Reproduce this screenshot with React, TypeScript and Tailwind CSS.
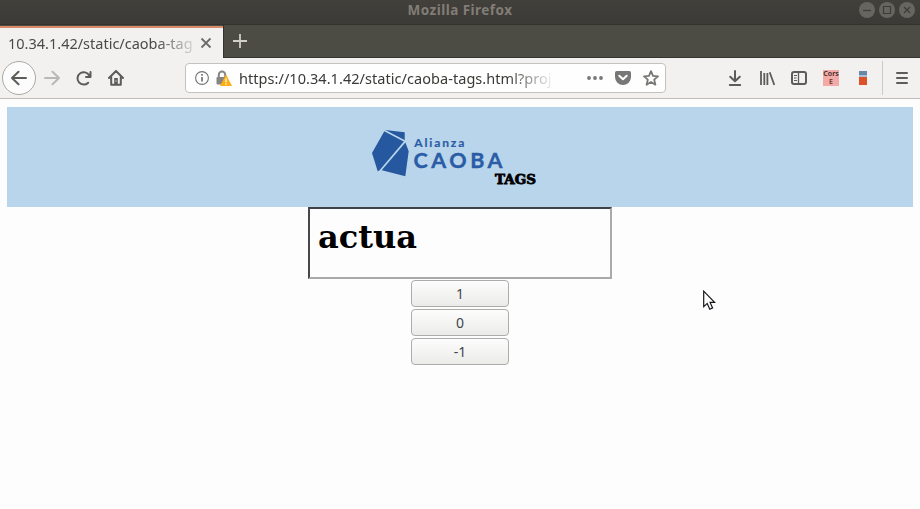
import React from "react";

const ui = "font-['Noto_Sans','Open_Sans',sans-serif]";

function WindowButton({ children }: { children: React.ReactNode }) {
  return (
    <span className="flex size-4 items-center justify-center rounded-full bg-[#67655f]">
      <svg width="16" height="16" viewBox="0 0 16 16" fill="none" stroke="#3c3b37" strokeWidth="1.2">
        {children}
      </svg>
    </span>
  );
}

function TitleBar() {
  return (
    <header className="grid h-[25px] grid-cols-[1fr_auto_1fr] items-start border-b border-[#33322e] bg-gradient-to-b from-[#41403b] to-[#3b3a36]">
      <span />
      <span className="pt-[1px] text-[13.5px] leading-[18px] font-bold tracking-[0.47px] text-[#827d76]">Mozilla Firefox</span>
      <div className="flex justify-end gap-1 pt-[2px] pr-[5px]">
        <WindowButton><path d="M4 8.5h8" /></WindowButton>
        <WindowButton><path d="M4.5 4.5h7v7h-7z" /></WindowButton>
        <WindowButton><path d="m5 5 6 6m0-6-6 6" /></WindowButton>
      </div>
    </header>
  );
}

function TabStrip() {
  return (
    <div className="flex h-[33px] border-b border-[#35342f] bg-[#4c4b44]">
      <div className="mt-px -mb-px flex w-[223px] items-center border-t-2 border-[#d98b69] bg-[#f2f1f0] pr-[11px] pl-2">
        <span className="w-[187px] text-[14.5px] leading-5 whitespace-nowrap text-[#4a4a47] [mask-image:linear-gradient(to_right,#000_148px,transparent_192px)]">
          10.34.1.42/static/caoba-tag
        </span>
        <svg className="ml-[5px]" width="12" height="12" viewBox="0 0 12 12" stroke="#6b6b68" strokeWidth="1.8">
          <path d="m1.5 1.5 9 9m0-9-9 9" />
        </svg>
      </div>
      <div className="flex items-center border-l border-[#33322e] pl-[9px]">
        <svg width="14" height="14" viewBox="0 0 14 14" stroke="#d0cec7" strokeWidth="1.8">
          <path d="M7 0v14M0 7h14" />
        </svg>
      </div>
    </div>
  );
}

function AddressBar() {
  return (
    <div className="flex h-[30px] w-[481px] items-center rounded-[4px] border border-[#c4c2bf] bg-[#fefefe] pl-[9px]">
      <svg width="14" height="14" viewBox="0 0 14 14" fill="none" stroke="#737371">
        <circle cx="7" cy="7" r="6.4" strokeWidth="1.1" />
        <path d="M7 6v4.5M7 3v1.7" strokeWidth="1.7" />
      </svg>
      <svg className="ml-[7px]" width="16" height="16" viewBox="0 0 16 16">
        <path d="M2.8 7V4.7a3.2 3.2 0 0 1 6.4 0V7" fill="none" stroke="#858583" strokeWidth="2" />
        <rect x="0.5" y="7" width="10" height="7.5" rx="1" fill="#858583" />
        <path d="M10 4.5 16 16H4z" fill="#ffae12" />
        <path d="M10 8.6v3.6m0 1v1.5" stroke="#fff" strokeWidth="1.3" />
      </svg>
      <span className="ml-[7px] w-[314px] text-[14.5px] leading-5 tracking-[0.05px] whitespace-nowrap text-[#393936] [mask-image:linear-gradient(to_right,#000_268px,transparent_316px)]">
        https://10.34.1.42/static/caoba-tags.html?proj
      </span>
      <svg className="ml-[34px]" width="16" height="16" viewBox="0 0 16 16" fill="#777775">
        <circle cx="2" cy="8" r="1.9" /><circle cx="8" cy="8" r="1.9" /><circle cx="14" cy="8" r="1.9" />
      </svg>
      <svg className="ml-3" width="16" height="16" viewBox="0 0 16 16">
        <path d="M1.8 1h12.4A1.8 1.8 0 0 1 16 2.8V7A8 8 0 0 1 0 7V2.8A1.8 1.8 0 0 1 1.8 1z" fill="#777775" />
        <path d="m4.3 5.8 3.7 3.5 3.7-3.5" fill="none" stroke="#fff" strokeWidth="2" strokeLinecap="round" strokeLinejoin="round" />
      </svg>
      <svg className="ml-3" width="16" height="16" viewBox="0 0 16 16" fill="none" stroke="#777775" strokeWidth="1.8" strokeLinejoin="round">
        <path d="m8 1.2 2 4.6 5 .5-3.8 3.4 1.2 5L8 12l-4.4 2.7 1.2-5L1 6.3l5-.5z" />
      </svg>
    </div>
  );
}

function Toolbar() {
  return (
    <div className="flex h-[41px] items-center border-b border-[#bebcba] bg-[#f2f1f0] pl-[2px] text-[#5c5c59]">
      <span className="flex size-[34px] items-center justify-center rounded-full border border-[#aaa9a6] bg-[#fcfcfc]">
        <svg width="16" height="16" viewBox="0 0 16 16" fill="none" stroke="currentColor" strokeWidth="2" strokeLinecap="round" strokeLinejoin="round">
          <path d="M15 8H1M7.5 1.8 1 8l6.5 6.2" />
        </svg>
      </span>
      <svg className="ml-2" width="16" height="16" viewBox="0 0 16 16" fill="none" stroke="#b9b8b6" strokeWidth="2" strokeLinecap="round" strokeLinejoin="round">
        <path d="M1 8h14M8.5 1.8 15 8l-6.5 6.2" />
      </svg>
      <svg className="ml-4" width="16" height="16" viewBox="0 0 16 16" fill="none" stroke="currentColor" strokeWidth="2" strokeLinecap="round" strokeLinejoin="round">
        <path d="M12.2 12.7A6.2 6.2 0 1 1 13.2 5.5M14.5 2v5H10" />
      </svg>
      <svg className="ml-4" width="16" height="16" viewBox="0 0 16 16" fill="none" stroke="currentColor" strokeWidth="2" strokeLinecap="round" strokeLinejoin="round">
        <path d="m1 8 7-7 7 7M3.2 7v7.8h9.6V7" />
        <path d="M6.2 8h3.6v6H6.2z" fill="currentColor" stroke="none" />
        <path d="M8 10.8v.4" stroke="#f2f1f0" strokeWidth="1" />
      </svg>
      <div className="ml-[61px]"><AddressBar /></div>
      <svg className="ml-[61px]" width="16" height="16" viewBox="0 0 16 16" fill="none" stroke="currentColor" strokeWidth="2" strokeLinecap="round" strokeLinejoin="round">
        <path d="M8 1v10M3.2 6.7 8 11.3l4.8-4.6M2.8 15h10.4" />
      </svg>
      <svg className="ml-4" width="16" height="16" viewBox="0 0 16 16" fill="none" stroke="currentColor" strokeWidth="1.8">
        <path d="M2 1v14M5.3 3v12M8.4 3v12M10.7 2.3 15.3 15" />
      </svg>
      <svg className="ml-4" width="16" height="16" viewBox="0 0 16 16" fill="none" stroke="currentColor">
        <rect x="1" y="2" width="14" height="12" rx="2" strokeWidth="2" />
        <path d="M7.5 2v12" strokeWidth="1.3" />
        <path d="M3 5.5h3M3 8h2.5M3 10.5h3" strokeWidth="1" />
      </svg>
      <span className="ml-4 flex size-4 flex-col items-center bg-[#f2aaa8] text-[7px] leading-[8px] font-semibold text-[#3b2523]">
        <span>Cors</span>
        <span className="text-[#6b3325]">E</span>
      </span>
      <span className="ml-[20px] flex h-[14px] w-2 flex-col">
        <span className="h-[4px] bg-[#6986a5]" />
        <span className="h-[2px] bg-[#a8c0d6]" />
        <span className="h-2 bg-[#db5128]" />
      </span>
      <span className="ml-[15px] h-[34px] w-px bg-[#cccac7]" />
      <svg className="ml-[13px]" width="12" height="14" viewBox="0 0 12 14" stroke="currentColor" strokeWidth="2" strokeLinecap="round">
        <path d="M1 2h10M1 7h10M1 12h10" />
      </svg>
    </div>
  );
}

function Logo() {
  return (
    <svg width="200" height="76" viewBox="0 0 200 76" role="img" aria-label="Alianza CAOBA TAGS">
      <path d="M25 10 44.7 12.3V20.7l4 10.6-3.4 25L21 50l-3.3 1.2L12 33z" fill="#25589f" />
      <path d="M24 10.3 46 21.8M45.8 20.6 18.5 52.8" stroke="#b9d5eb" strokeWidth="1.7" />
      <g fill="#2b5ca6" stroke="#2b5ca6" fontFamily="Lato, sans-serif" fontWeight="700">
        <text x="54.3" y="27" fontSize="12" strokeWidth="0.2" textLength="50" lengthAdjust="spacing">Alianza</text>
        <text x="53.5" y="47.5" fontSize="21.5" strokeWidth="0.4" textLength="89" lengthAdjust="spacing">CAOBA</text>
      </g>
      <text x="135" y="64" fontFamily="'DejaVu Serif', serif" fontWeight="700" fontSize="12.5" stroke="#000" strokeWidth="0.8" textLength="41" lengthAdjust="spacingAndGlyphs">TAGS</text>
    </svg>
  );
}

function TagButton({ label }: { label: string }) {
  return (
    <button className="h-[27px] w-[98px] rounded-[4px] border border-[#acacaa] bg-gradient-to-b from-[#fdfdfd] to-[#ebebe9] text-[14px] leading-[25px] text-[#42454b]">
      {label}
    </button>
  );
}

export default function App() {
  return (
    <div className={`relative flex h-[509px] w-[920px] flex-col overflow-hidden bg-[#fefdfe] ${ui}`}>
      <TitleBar />
      <TabStrip />
      <Toolbar />
      <main className="flex flex-1 flex-col px-[7px] pt-2">
        <div className="flex h-[100px] justify-center bg-[#b9d5eb] pt-[13px]">
          <Logo />
        </div>
        <div className="flex h-[72px] w-[304px] self-center border-2 border-t-[#3d4148] border-r-[#aaaaac] border-b-[#aaaaac] border-l-[#48484a] pt-[9px] pl-2">
          <h1 className="font-['DejaVu_Serif',serif] text-[32px] leading-[38px] font-bold text-black">actua</h1>
        </div>
        <div className="flex flex-col items-center gap-[2px] pt-px">
          <TagButton label="1" />
          <TagButton label="0" />
          <TagButton label="-1" />
        </div>
      </main>
      <svg className="absolute top-[290px] left-[703px]" width="13" height="21" viewBox="0 0 13 21" fill="#fff" stroke="#15151a" strokeWidth="1.2">
        <path d="M.7 1.2v15.5l3.5-3.3 2.6 5.8 2.8-1.3-2.5-5.5h4.5z" />
      </svg>
    </div>
  );
}
